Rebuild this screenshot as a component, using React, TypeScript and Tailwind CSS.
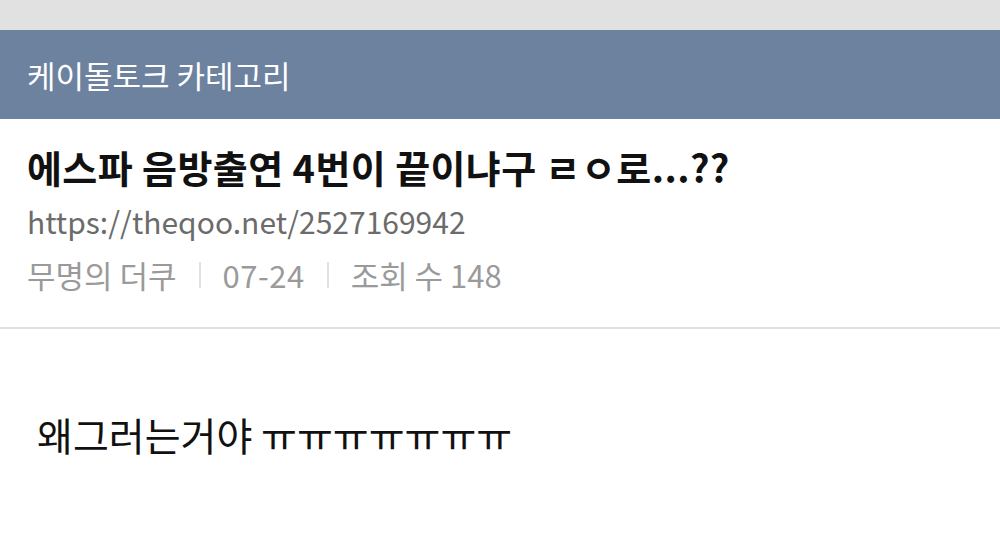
const font = { fontFamily: '"Noto Sans CJK KR", "Noto Sans", sans-serif' }

function Sep() {
  return <span className="mx-[22px] inline-block h-[26px] w-[2px] bg-[#e2e2e2]" />
}

export default function App() {
  return (
    <div className="flex h-[541px] w-[1000px] flex-col overflow-hidden bg-white" style={font}>
      {/* status strip */}
      <div className="h-[30px] shrink-0 bg-[#e1e1e1]" />

      {/* category header */}
      <div className="flex h-[89px] shrink-0 items-center bg-[#6d829f] px-[27px]">
        <span className="text-[31px] leading-none text-white">케이돌토크 카테고리</span>
      </div>

      {/* post head */}
      <div className="shrink-0 border-b-2 border-[#e0e0e0] px-[27px] pt-[28px] pb-[34px]">
        <h1 className="text-[38px] font-bold leading-[40px] tracking-[0.4px] text-[#111]">
          에스파 음방출연 4번이 끝이냐구 ㄹㅇ로...??
        </h1>
        <div className="mt-[16px] text-[30px] leading-[36px] text-[#6b6b6b]">
          https://theqoo.net/2527169942
        </div>
        <div className="mt-[18px] flex items-center text-[31px] leading-[36px] text-[#9a9a9a]">
          <span>무명의 더쿠</span>
          <Sep />
          <span className="tracking-[0.5px]">07-24</span>
          <Sep />
          <span>조회 수 148</span>
        </div>
      </div>

      {/* post body */}
      <div className="px-[37px] pt-[85px]">
        <p className="text-[39px] leading-[40px] text-[#111]">왜그러는거야 ㅠㅠㅠㅠㅠㅠㅠ</p>
      </div>
    </div>
  )
}
